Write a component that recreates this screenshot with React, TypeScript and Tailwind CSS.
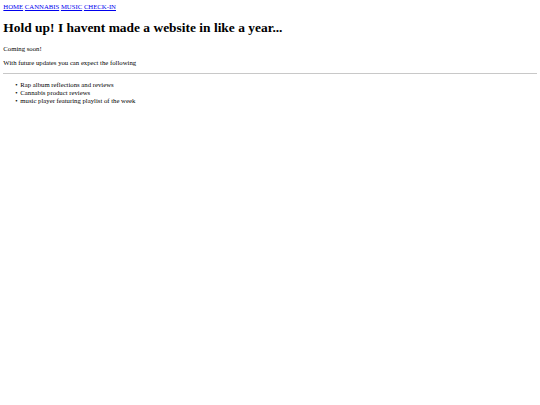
const links = ['HOME', 'CANNABIS', 'MUSIC', 'CHECK-IN'];

const upcoming = [
  'Rap album reflections and reviews',
  'Cannabis product reviews',
  'music player featuring playlist of the week',
];

export default function App() {
  return (
    <div className="min-h-screen bg-white p-[3.36px] font-['Liberation_Serif',serif] text-[6.72px] leading-[1.15] text-black">
      <nav>
        {links.map((l, i) => (
          <span key={l}>
            <a href="#" className="text-[#0000EE] underline">
              {l}
            </a>
            {i < links.length - 1 ? ' ' : ''}
          </span>
        ))}
      </nav>
      <h1 className="my-[0.67em] text-[13.44px] font-bold leading-[1.15]">
        Hold up! I havent made a website in like a year...
      </h1>
      <p className="my-[1em]">Coming soon!</p>
      <p className="my-[1em]">With future updates you can expect the following</p>
      <hr className="my-[3.36px] border-t border-[#c8c8c8]" />
      <ul className="my-[1em] list-none pl-[12px]">
        {upcoming.map((u) => (
          <li key={u} className="flex">
            <span className="w-[5px] shrink-0">•</span>
            <span>{u}</span>
          </li>
        ))}
      </ul>
    </div>
  );
}
